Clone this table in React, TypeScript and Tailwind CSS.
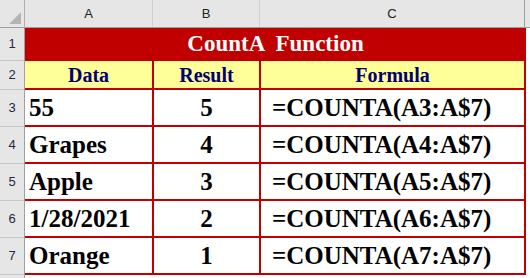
import React from "react";

type DataRow = {
  row: number;
  data: string;
  result: number;
  formula: string;
};

const rows: DataRow[] = [
  { row: 3, data: "55", result: 5, formula: "=COUNTA(A3:A$7)" },
  { row: 4, data: "Grapes", result: 4, formula: "=COUNTA(A4:A$7)" },
  { row: 5, data: "Apple", result: 3, formula: "=COUNTA(A5:A$7)" },
  { row: 6, data: "1/28/2021", result: 2, formula: "=COUNTA(A6:A$7)" },
  { row: 7, data: "Orange", result: 1, formula: "=COUNTA(A7:A$7)" },
];

const serif = "font-['Liberation_Serif',serif] font-bold";

const RowNumber = ({ n, height }: { n: number; height: string }) => (
  <div
    className={`flex ${height} items-center justify-center border-b border-[#c6c6c6] text-[13px] text-[#262640]`}
  >
    {n}
  </div>
);

const App = () => {
  return (
    <div className="flex h-[278px] w-[530px] flex-col overflow-hidden bg-white font-['Liberation_Sans',sans-serif]">
      {/* column letters */}
      <div className="flex h-[28px] shrink-0 border-b border-[#9f9f9f] bg-[#e6e6e6] text-[13px] text-[#222]">
        <div className="flex w-[25px] items-end justify-end border-r border-[#b0b0b0] pb-[3px] pr-[3px]">
          <svg width="12" height="12" viewBox="0 0 12 12">
            <polygon points="12,0 12,12 0,12" fill="#b4b4b4" />
          </svg>
        </div>
        <div className="flex w-[128px] items-center justify-center border-r border-[#cfcfcf] pt-[1px]">
          A
        </div>
        <div className="flex w-[107px] items-center justify-center border-r border-[#cfcfcf] pt-[1px]">
          B
        </div>
        <div className="flex w-[265px] items-center justify-center border-r border-[#9f9f9f] pt-[1px]">
          C
        </div>
      </div>

      <div className="flex flex-1">
        {/* row numbers */}
        <div className="flex w-[25px] shrink-0 flex-col border-r border-[#9f9f9f] bg-[#e6e6e6]">
          <RowNumber n={1} height="h-[33px]" />
          <RowNumber n={2} height="h-[29px]" />
          {rows.map((r) => (
            <RowNumber key={r.row} n={r.row} height="h-[37px]" />
          ))}
        </div>

        {/* sheet */}
        <div className="flex w-[501px] flex-col">
          <div
            className={`flex h-[33px] items-center justify-center whitespace-pre bg-[#c00000] text-[23px] text-white ${serif}`}
          >
            CountA  Function
          </div>
          <div
            className={`flex h-[29px] border-b-2 border-[#c00000] bg-[#ffff99] text-[20px] text-[#000073] ${serif}`}
          >
            <div className="flex w-[129px] items-center justify-center border-r-2 border-[#c00000]">
              Data
            </div>
            <div className="flex w-[107px] items-center justify-center border-r-2 border-[#c00000]">
              Result
            </div>
            <div className="flex w-[265px] items-center justify-center border-r-2 border-[#c00000]">
              Formula
            </div>
          </div>
          {rows.map((r) => (
            <div
              key={r.row}
              className={`flex h-[37px] border-b-2 border-[#c00000] text-[25px] text-black ${serif}`}
            >
              <div className="flex w-[129px] items-center border-r-2 border-[#c00000] pl-[4px]">
                {r.data}
              </div>
              <div className="flex w-[107px] items-center justify-center border-r-2 border-[#c00000]">
                {r.result}
              </div>
              <div className="flex w-[265px] items-center border-r-2 border-[#c00000] pl-[11px]">
                {r.formula}
              </div>
            </div>
          ))}
        </div>
      </div>
    </div>
  );
};

export default App;
